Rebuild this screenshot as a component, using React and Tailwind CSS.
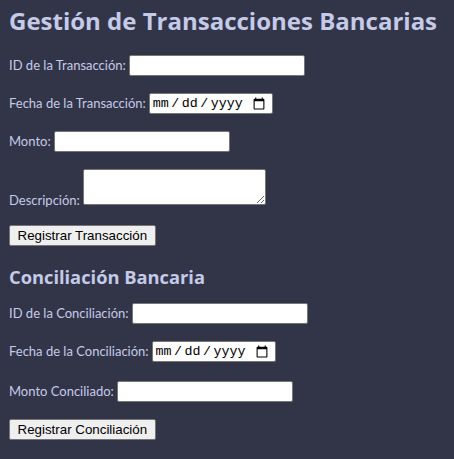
export default function App() {
  const label = "text-[#c5cae9] text-[13px] font-['Lato',sans-serif]";
  const textInput =
    "h-[21px] w-[176px] bg-white border border-[#767676] rounded-[2px] px-[2px] text-[13px] text-black font-['Liberation_Sans',sans-serif]";
  const dateInput =
    "h-[21px] w-[124px] bg-white border border-[#767676] rounded-[2px] pl-[2px] pr-[4px] text-[13.33px] text-black font-['Liberation_Mono',monospace] [&::-webkit-datetime-edit]:font-['Liberation_Mono',monospace] [&::-webkit-datetime-edit-text]:px-[1.5px]";
  const btn =
    "h-[21px] bg-[#efefef] border border-[#767676] rounded-[2px] px-[7.5px] text-[13.33px] leading-none text-black font-['Liberation_Sans',sans-serif]";
  return (
    <div className="min-h-[459px] w-[454px] bg-[#323548] px-[9px] pt-[5px] font-['Lato',sans-serif]">
      <h1 className="text-[24px] leading-[32px] font-bold text-[#c5cae9] font-['Open_Sans',sans-serif]">
        Gestión de Transacciones Bancarias
      </h1>
      <div className="mt-[18px] flex items-center gap-[3px]">
        <label className={label}>ID de la Transacción:</label>
        <input type="text" className={textInput} />
      </div>
      <div className="mt-[17px] flex items-center gap-[3px]">
        <label className={label}>Fecha de la Transacción:</label>
        <input type="date" className={dateInput} />
      </div>
      <div className="mt-[17px] flex items-center gap-[3px]">
        <label className={label}>Monto:</label>
        <input type="text" className={textInput} />
      </div>
      <div className="mt-[17px] flex items-end gap-[3px]">
        <label className={label + " leading-[16px] mb-[-3px]"}>Descripción:</label>
        <textarea className="h-[36px] w-[183px] bg-white border border-[#767676] rounded-[2px] resize" />
      </div>
      <div className="mt-[17px]">
        <button className={btn}>Registrar Transacción</button>
      </div>
      <h2 className="mt-[18px] text-[18.3px] leading-[26px] font-bold text-[#c5cae9] font-['Open_Sans',sans-serif]">
        Conciliación Bancaria
      </h2>
      <div className="mt-[13px] flex items-center gap-[3px]">
        <label className={label}>ID de la Conciliación:</label>
        <input type="text" className={textInput} />
      </div>
      <div className="mt-[17px] flex items-center gap-[3px]">
        <label className={label}>Fecha de la Conciliación:</label>
        <input type="date" className={dateInput} />
      </div>
      <div className="mt-[19px] flex items-center gap-[3px]">
        <label className={label}>Monto Conciliado:</label>
        <input type="text" className={textInput} />
      </div>
      <div className="mt-[14px]">
        <button className={btn}>Registrar Conciliación</button>
      </div>
    </div>
  );
}
